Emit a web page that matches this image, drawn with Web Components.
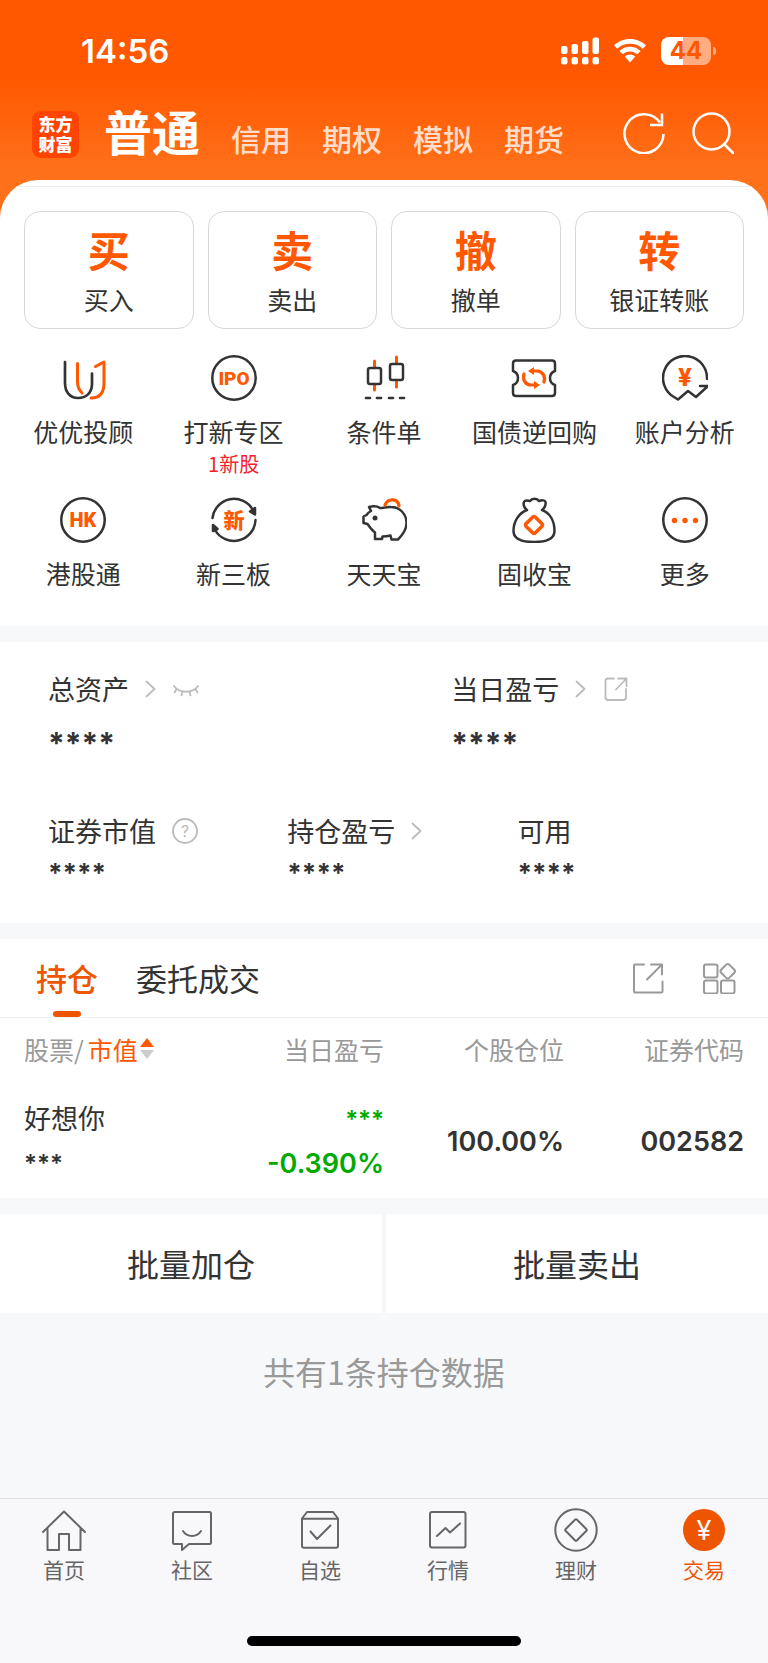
<!DOCTYPE html>
<html lang="zh-CN">
<head>
<meta charset="utf-8">
<meta name="viewport" content="width=device-width,initial-scale=1">
<title>交易</title>
<style>
:root{
    --themeColor:#ff5800;
    --activeColor:#ee5500;
    --textColor:#333;
    --mutedColor:#999;
    --pageColor:#f7f8fa;
    --numFont:Inter,"Noto Sans CJK SC",sans-serif;
}
body{
    margin:0;
    display:flex;
    flex-direction:column;
    min-height:100vh;
    background:var(--pageColor);
    color:var(--textColor);
    font-family:"Noto Sans CJK SC",sans-serif;
}
main{
    flex:1;
    display:flex;
    flex-direction:column;
    gap:16px;
}
</style>
</head>
<body>
<trade-header>
    <status-bar slot="status" level="44">14:56</status-bar>
    <a slot="current" href="#normal">普通</a>
    <a href="#credit">信用</a>
    <a href="#option">期权</a>
    <a href="#mock">模拟</a>
    <a href="#futures">期货</a>
</trade-header>
<main>
    <quick-panel>
        <quick-action slot="action" mark="买">买入</quick-action>
        <quick-action slot="action" mark="卖">卖出</quick-action>
        <quick-action slot="action" mark="撤">撤单</quick-action>
        <quick-action slot="action" mark="转">银证转账</quick-action>
        <menu-item icon="adviser">优优投顾</menu-item>
        <menu-item icon="ipo" note="1新股">打新专区</menu-item>
        <menu-item icon="candle">条件单</menu-item>
        <menu-item icon="repo">国债逆回购</menu-item>
        <menu-item icon="analysis">账户分析</menu-item>
        <menu-item icon="hk">港股通</menu-item>
        <menu-item icon="board">新三板</menu-item>
        <menu-item icon="pig">天天宝</menu-item>
        <menu-item icon="bag">固收宝</menu-item>
        <menu-item icon="more">更多</menu-item>
    </quick-panel>
    <asset-panel>
        <asset-item slot="total" size="large" value="****" arrow icon="eye" tip="显示金额">总资产</asset-item>
        <asset-item slot="total" size="large" value="****" arrow icon="share" tip="分享">当日盈亏</asset-item>
        <asset-item value="****" icon="help" tip="说明">证券市值</asset-item>
        <asset-item value="****" arrow>持仓盈亏</asset-item>
        <asset-item value="****">可用</asset-item>
    </asset-panel>
    <position-panel></position-panel>
    <batch-bar>
        <button-cell>批量加仓</button-cell>
        <button-cell>批量卖出</button-cell>
        <span slot="note">共有1条持仓数据</span>
    </batch-bar>
</main>
<tab-bar>
    <tab-item icon="home">首页</tab-item>
    <tab-item icon="chat">社区</tab-item>
    <tab-item icon="watch">自选</tab-item>
    <tab-item icon="quote">行情</tab-item>
    <tab-item icon="wealth">理财</tab-item>
    <tab-item icon="trade" active>交易</tab-item>
</tab-bar>

<script>
// [viewBox width, viewBox height, markup]; class o = orange stroke, f = orange fill
const ICONS = {
    signal: [38, 28, '<g fill="currentColor" stroke="none"><rect y="9" width="6.500" height="8" rx="2"/><rect x="10.500" y="7" width="6.500" height="10" rx="2"/><rect x="21" y="4" width="6.500" height="13" rx="2"/><rect x="31.500" y=".5" width="6.500" height="16.500" rx="2"/><rect y="20" width="6.500" height="7.500" rx="2.500"/><rect x="10.500" y="20" width="6.500" height="7.500" rx="2.500"/><rect x="21" y="20" width="6.500" height="7.500" rx="2.500"/><rect x="31.500" y="20" width="6.500" height="7.500" rx="2.500"/></g>'],
    wifi: [34, 28, '<g fill="currentColor" stroke="none"><path d="M17 2C10.600 2 5 4.500 1 8.300l3.200 3.400C7.400 8.600 12 6.700 17 6.700s9.600 1.900 12.800 5L33 8.300C29 4.500 23.400 2 17 2z"/><path d="M17 9.800c-4.200 0-7.900 1.600-10.600 4.100l3.300 3.400c1.900-1.700 4.500-2.800 7.300-2.800s5.400 1.100 7.300 2.800l3.300-3.400C24.900 11.400 21.200 9.800 17 9.800z"/><path d="M17 17.500c-2 0-3.900.8-5.200 2L17 25.500l5.200-6c-1.300-1.200-3.200-2-5.200-2z"/></g>'],
    refresh: [42, 42, '<path d="M40.500 22A19.500 19.500 0 1 1 37 10.500M39 1.500V13H27" stroke-width="2.500" stroke-linecap="butt" stroke-linejoin="miter"/>'],
    search: [42, 42, '<circle cx="19.500" cy="19.500" r="18" stroke-width="2.500"/><path d="M32 32l9 9" stroke-width="2.700"/>'],
    adviser: [46, 46, '<path d="M5 7V28C5 37 10 43 18 43S32 38 32 29V18.500" stroke-width="2.700"/><path class="o" d="M17.500 8.500V27c0 5 1.500 8 4.500 11M35.500 11.500L44 7v21c0 10-4 15-13 15" stroke-width="3"/>'],
    ipo: [46, 46, '<circle cx="23" cy="23" r="21.700"/><text x="23" y="30" font-family="Roboto,sans-serif" font-size="19" font-weight="900">IPO</text>'],
    candle: [46, 46, '<path class="o" d="M13.500 6v6M13.500 30v5M35.500 2v6M35.500 27v5" stroke-width="3"/><rect x="7" y="13" width="13" height="16" rx="2"/><rect x="29" y="9" width="13" height="16" rx="2"/><path d="M5 43h4M16 43h4M28 43h4M39 43h4" stroke-width="2.700"/>'],
    repo: [46, 46, '<path d="M5 5.500h36q3 0 3 3V16c-3 1-5 4-5 7s2 6 5 7v8q0 3-3 3H5q-3 0-3-3v-8c3-1 5-4 5-7s-2-6-5-7V8.500q0-3 3-3z"/><path class="o" d="M13 19c-2 6 2 11 7 11h4M33 27c2-6-2-11-7-11h-4" stroke-width="3.200"/><path class="f" d="M23 12v8l-6-4zM23 34v-8l6 4z"/>'],
    analysis: [46, 46, '<path d="M45 24A22 22 0 1 0 12 42l4 2.500L26 36l8 6L46 31h-8"/><text x="23" y="31" font-family="Inter,sans-serif" font-size="24" font-weight="800">¥</text>'],
    hk: [46, 46, '<circle cx="23" cy="23" r="21.700"/><text x="23" y="30" font-family="Roboto,sans-serif" font-size="20" font-weight="900">HK</text>'],
    board: [46, 46, '<path d="M1.500 21A21.700 21.700 0 0 1 42 13M44.500 23A21.700 21.700 0 0 1 4 33"/><path d="M44 11v6.500l-5-3zM2 34v-6l4.500 4z" fill="currentColor"/><text x="23" y="30.500" font-size="21" font-weight="900">新</text>'],
    pig: [46, 46, '<path d="M8 10c4-1 8-1 11 1 4 0 7-1.500 11-1 9 0 15 7 15.500 15 .5 7-4 13-8.500 17.500h-6.500l-1-4c-4 1-5 1-8 1l-.5 2.500H14v-6.500c-3-2-5-5-7.500-8.500L2.500 26v-6.500l3-1.500C7 15.500 8 15 10 14z"/><path class="o" d="M24 8c3-7 13-7 14 1" stroke-width="3.200"/><circle cx="14" cy="21" r="2.500" fill="currentColor" stroke="none"/>'],
    bag: [46, 46, '<path d="M16 13c-3-2-4-6-3-8s3-2 6-1c2-3 7-3 9 0 3-1 6-1 6.500 1s-.5 6-3.500 8c8 3 12.500 11 12.500 21 0 8-7 11-20.500 11S2.500 42 2.500 34C2.500 24 8 16 16 13z"/><rect class="o" x="16.500" y="21.500" width="13" height="13" rx="2" transform="rotate(45 23 28)" stroke-width="3.500"/>'],
    more: [46, 46, '<circle cx="23" cy="23" r="21.700"/><g class="f"><circle cx="12.500" cy="23.500" r="2.700"/><circle cx="23" cy="23.500" r="2.700"/><circle cx="33.500" cy="23.500" r="2.700"/></g>'],
    chevron: [12, 18, '<path d="M1.500 1.500L9.500 9l-8 7.500" stroke-width="1.800"/>'],
    eye: [26, 26, '<path d="M1 10c5 7.500 19 7.500 24 0M3.500 13l-2 3.500M9.500 15.500l-1 4M16.500 15.500l1 4M22.500 13l2 3.500" stroke-width="1.700"/>'],
    share: [26, 26, '<path d="M11 2.500H5Q2.500 2.500 2.500 5v16q0 3 2.500 3h15q3 0 3-3v-8M15 2.500h8.500V10M23.500 2.500L13 13.500" stroke-width="1.800"/>'],
    help: [26, 26, '<circle cx="13" cy="13" r="12" stroke-width="1.800"/><text x="13" y="19" font-family="Inter,sans-serif" font-size="16" fill="currentColor">?</text>'],
    open: [32, 32, '<path d="M12 2.500H3Q2 2.500 2 3.500V29q0 1.500 1 1.500h26q1.500 0 1.500-1.500V19.500M19 2.500h11v10M30 2.500L15 17.500" stroke-width="2"/>'],
    grid: [34, 32, '<rect x="2" y="2.500" width="13.500" height="13" rx="2"/><rect x="2" y="18.500" width="13.500" height="13" rx="2"/><rect x="19" y="18.500" width="13.500" height="13" rx="2"/><rect x="20" y="3.500" width="11.500" height="11.500" rx="2.500" transform="rotate(45 25.750 9.250)"/>'],
    home: [44, 44, '<path d="M1 24L22 3.500 43 24M5.500 20.500V42h11.500V26h10v16h11.500V20.500"/>'],
    chat: [44, 44, '<path d="M5 4h34.500q1.500 0 1.500 1.500v29q0 1.500-1.500 1.500H19l-7 6v-6H4.500Q3 36 3 34.500v-29Q3 4 5 4z"/><path d="M13 23c4 6.500 14 6.500 18 0"/>'],
    watch: [44, 44, '<path d="M9 4h26l5 6.500V38q0 1.800-2 1.800H6q-2 0-2-1.800V10.500zM4 10.800h36M12.500 23.500l6.500 7.500 13.500-13.500"/>'],
    quote: [44, 44, '<rect x="4" y="4" width="35.500" height="35.500" rx="2"/><path d="M11 28l8.500-8 4.500 4.500L34 15.500"/>'],
    wealth: [44, 44, '<circle cx="22" cy="22" r="20.700"/><rect x="14" y="14" width="16" height="16" rx="1.500" transform="rotate(45 22 22)"/>'],
    trade: [44, 44, '<circle cx="22" cy="22" r="21" fill="currentColor" stroke="none"/><text x="22" y="32" font-family="Inter,sans-serif" font-size="27" style="fill:#fff">¥</text>'],
    sort: [14, 22, '<path class="f" d="M7 0l7 9H0z"/><path d="M7 21l7-9H0z" fill="#ccc" stroke="none"/>']
};

class AppIcon extends HTMLElement {

    constructor() {
        super();
        this.attachShadow({ mode: 'open' });
    }

    connectedCallback() {
        const [w, h, body] = ICONS[this.getAttribute('name')];
        this.shadowRoot.innerHTML = `
        <style>
        :host{
            display:inline-flex;
            flex:none;
        }
        svg{
            display:block;
            fill:none;
            stroke:currentColor;
            stroke-width:var(--iconStroke,2);
            stroke-linecap:round;
            stroke-linejoin:round;
        }
        .o{
            stroke:var(--themeColor);
        }
        .f{
            fill:var(--themeColor);
            stroke:none;
        }
        text{
            fill:var(--iconText,var(--themeColor));
            stroke:none;
            text-anchor:middle;
        }
        </style>
        <svg width="${w}" height="${h}" viewBox="0 0 ${w} ${h}" aria-hidden="true">${body}</svg>
        `
    }
}
customElements.define('app-icon', AppIcon);

class StatusBar extends HTMLElement {

    constructor() {
        super();
        const shadowRoot = this.attachShadow({ mode: 'open' });
        shadowRoot.innerHTML = `
        <style>
        :host{
            display:flex;
            align-items:center;
            gap:14px;
            height:40px;
            padding:31px 52px 0 81px;
            font:600 33px/40px var(--numFont);
            color:#fff;
        }
        .time{
            flex:1;
        }
        .battery{
            display:flex;
            align-items:center;
            gap:2px;
        }
        .level{
            box-sizing:border-box;
            width:50px;
            height:28px;
            border-radius:8px;
            background:linear-gradient(90deg,#fff 44%,rgba(255,255,255,.5) 44%);
            color:var(--themeColor);
            font-size:24px;
            font-weight:700;
            line-height:28px;
            text-align:center;
        }
        .battery::after{
            content:'';
            width:3px;
            height:8px;
            border-radius:0 4px 4px 0;
            background:rgba(255,255,255,.5);
        }
        </style>
        <span class="time"><slot></slot></span>
        <app-icon name="signal"></app-icon>
        <app-icon name="wifi"></app-icon>
        <span class="battery"><span class="level"></span></span>
        `
    }

    connectedCallback() {
        this.shadowRoot.querySelector('.level').textContent = this.getAttribute('level');
    }
}
customElements.define('status-bar', StatusBar);

class TradeHeader extends HTMLElement {

    constructor() {
        super();
        const shadowRoot = this.attachShadow({ mode: 'open' });
        shadowRoot.innerHTML = `
        <style>
        :host{
            display:block;
            padding-bottom:64px;
            background:linear-gradient(#ff5800 76px,#ff701a 170px);
            color:#fff;
        }
        .bar{
            display:flex;
            align-items:center;
            height:80px;
            margin-top:23px;
            padding:0 34px 0 32px;
        }
        .logo{
            display:flex;
            flex-direction:column;
            justify-content:center;
            width:47px;
            height:47px;
            border-radius:9px;
            background:#ff4400;
            font-size:17px;
            font-weight:900;
            line-height:20px;
            text-align:center;
        }
        nav{
            flex:1;
            display:flex;
            align-items:baseline;
            gap:31px;
            margin-left:25px;
        }
        ::slotted(a){
            color:rgba(255,255,255,.8);
            font-size:30px;
            font-weight:500;
            line-height:72px;
            text-decoration:none;
        }
        ::slotted([slot=current]){
            color:#fff;
            font-size:48px;
            font-weight:700;
        }
        .tools{
            display:flex;
            gap:27px;
        }
        button{
            padding:0;
            border:0;
            background:none;
            color:inherit;
            cursor:pointer;
        }
        </style>
        <slot name="status"></slot>
        <div class="bar">
            <div class="logo"><span>东方</span><span>财富</span></div>
            <nav><slot name="current"></slot><slot></slot></nav>
            <div class="tools">
                <button aria-label="刷新"><app-icon name="refresh"></app-icon></button>
                <button aria-label="搜索"><app-icon name="search"></app-icon></button>
            </div>
        </div>
        `
    }
}
customElements.define('trade-header', TradeHeader);

class QuickPanel extends HTMLElement {

    constructor() {
        super();
        const shadowRoot = this.attachShadow({ mode: 'open' });
        shadowRoot.innerHTML = `
        <style>
        :host{
            display:block;
            margin-top:-58px;
            padding-top:6px;
            border-radius:38px 38px 0 0;
            background:#fff;
            overflow:hidden;
        }
        .actions{
            display:grid;
            grid-template-columns:repeat(4,1fr);
            gap:14px;
            padding:24px 24px 0;
            border-top:1px solid #eee;
        }
        .menu{
            display:grid;
            grid-template-columns:repeat(5,1fr);
            grid-auto-rows:129px;
            row-gap:13px;
            padding:26px 8px 0;
        }
        </style>
        <div class="actions"><slot name="action"></slot></div>
        <div class="menu"><slot></slot></div>
        `
    }
}
customElements.define('quick-panel', QuickPanel);

class QuickAction extends HTMLElement {

    constructor() {
        super();
        const shadowRoot = this.attachShadow({ mode: 'open' });
        shadowRoot.innerHTML = `
        <style>
        :host{
            display:block;
        }
        button{
            box-sizing:border-box;
            display:flex;
            flex-direction:column;
            align-items:center;
            width:100%;
            height:118px;
            padding:13px 0 0;
            border:1px solid #d8d8d8;
            border-radius:16px;
            background:#fff;
            color:inherit;
            font:inherit;
            font-size:25px;
            line-height:32px;
            cursor:pointer;
        }
        b{
            color:var(--themeColor);
            font-size:42px;
            line-height:48px;
            margin-bottom:10px;
        }
        button:active{
            background:#f5f5f5;
        }
        </style>
        <button><b></b><span><slot></slot></span></button>
        `
    }

    connectedCallback() {
        this.shadowRoot.querySelector('b').textContent = this.getAttribute('mark');
    }
}
customElements.define('quick-action', QuickAction);

class MenuItem extends HTMLElement {

    constructor() {
        super();
        this.attachShadow({ mode: 'open' });
    }

    connectedCallback() {
        const note = this.getAttribute('note');
        this.shadowRoot.innerHTML = `
        <style>
        :host{
            display:block;
            --iconStroke:2.5;
        }
        a{
            display:flex;
            flex-direction:column;
            align-items:center;
            color:inherit;
            font-size:25px;
            line-height:32px;
            text-decoration:none;
            white-space:nowrap;
        }
        app-icon{
            margin-bottom:14px;
        }
        small{
            color:#f5222d;
            font-size:20px;
            line-height:34px;
        }
        </style>
        <a href="#${this.getAttribute('icon')}"><app-icon name="${this.getAttribute('icon')}"></app-icon><slot></slot>${note ? `<small>${note}</small>` : ''}</a>
        `
    }
}
customElements.define('menu-item', MenuItem);

class AssetPanel extends HTMLElement {

    constructor() {
        super();
        const shadowRoot = this.attachShadow({ mode: 'open' });
        shadowRoot.innerHTML = `
        <style>
        :host{
            display:flex;
            flex-direction:column;
            gap:52px;
            padding:29px 48px 32px;
            background:#fff;
        }
        div{
            display:grid;
        }
        .total{
            grid-template-columns:3fr 2fr;
        }
        .detail{
            grid-template-columns:26fr 25fr 22fr;
        }
        </style>
        <div class="total"><slot name="total"></slot></div>
        <div class="detail"><slot></slot></div>
        `
    }
}
customElements.define('asset-panel', AssetPanel);

class AssetItem extends HTMLElement {

    constructor() {
        super();
        this.attachShadow({ mode: 'open' });
    }

    connectedCallback() {
        const icon = this.getAttribute('icon');
        const arrow = this.hasAttribute('arrow');
        this.shadowRoot.innerHTML = `
        <style>
        :host{
            display:block;
            font-size:27px;
            line-height:36px;
        }
        .label{
            display:flex;
            align-items:center;
            gap:16px;
        }
        app-icon{
            color:#bbb;
            --iconText:#bbb;
        }
        button{
            display:flex;
            padding:0;
            border:0;
            background:none;
            cursor:pointer;
        }
        .value{
            padding-top:6px;
            font-family:var(--numFont);
            font-size:26px;
            font-weight:700;
            line-height:36px;
        }
        :host([size=large]) .value{
            padding-top:18px;
            font-size:30px;
        }
        </style>
        <div class="label">
            <slot></slot>
            ${arrow ? '<app-icon name="chevron"></app-icon>' : ''}
            ${icon ? `<button aria-label="${this.getAttribute('tip')}"><app-icon name="${icon}"></app-icon></button>` : ''}
        </div>
        <div class="value">${this.getAttribute('value')}</div>
        `
    }
}
customElements.define('asset-item', AssetItem);

class PositionPanel extends HTMLElement {

    constructor() {
        super();
        const shadowRoot = this.attachShadow({ mode: 'open' });
        shadowRoot.innerHTML = `
        <style>
        :host{
            display:block;
            background:#fff;
        }
        .tabs{
            display:flex;
            align-items:center;
            gap:38px;
            height:78px;
            padding:0 32px 0 36px;
            border-bottom:1px solid #f0f1f3;
        }
        button{
            padding:0;
            border:0;
            background:none;
            color:inherit;
            font:inherit;
            cursor:pointer;
        }
        .tab{
            height:78px;
            font-size:31px;
            line-height:78px;
        }
        .tab.active{
            display:flex;
            flex-direction:column;
            align-items:center;
            color:var(--activeColor);
            font-weight:500;
        }
        .tab.active::after{
            content:'';
            width:28px;
            height:6px;
            margin-top:-6px;
            border-radius:3px;
            background:var(--activeColor);
        }
        .tools{
            display:flex;
            gap:38px;
            margin-left:auto;
            color:#999;
        }
        .tools button{
            display:flex;
        }
        table{
            width:100%;
            padding:0 24px;
            border-spacing:0;
            table-layout:fixed;
        }
        th,td{
            padding:0;
            text-align:right;
            white-space:nowrap;
        }
        th:first-child,td:first-child{
            text-align:left;
        }
        th{
            height:62px;
            color:var(--mutedColor);
            font-size:25px;
            font-weight:400;
        }
        th button{
            display:flex;
            align-items:center;
            gap:2px;
        }
        em{
            padding-left:4px;
            color:var(--themeColor);
            font-style:normal;
        }
        td{
            height:113px;
            padding-top:5px;
            font-family:var(--numFont);
            font-size:27px;
            font-weight:600;
            line-height:40px;
        }
        .name{
            font-weight:400;
        }
        .mask{
            font-size:24px;
        }
        .down{
            color:#0a0;
        }
        td div + div{
            margin-top:4px;
        }
        </style>
        <div class="tabs">
            <button class="tab active">持仓</button>
            <button class="tab">委托成交</button>
            <div class="tools">
                <button aria-label="分享"><app-icon name="open"></app-icon></button>
                <button aria-label="模块"><app-icon name="grid"></app-icon></button>
            </div>
        </div>
        <table>
            <thead>
                <tr>
                    <th><button><span>股票/<em>市值</em></span><app-icon name="sort"></app-icon></button></th>
                    <th>当日盈亏</th>
                    <th>个股仓位</th>
                    <th>证券代码</th>
                </tr>
            </thead>
            <tbody>
                <tr>
                    <td><div class="name">好想你</div><div class="mask">***</div></td>
                    <td class="down"><div class="mask">***</div><div>-0.390%</div></td>
                    <td>100.00%</td>
                    <td>002582</td>
                </tr>
            </tbody>
        </table>
        `
    }
}
customElements.define('position-panel', PositionPanel);

class BatchBar extends HTMLElement {

    constructor() {
        super();
        const shadowRoot = this.attachShadow({ mode: 'open' });
        shadowRoot.innerHTML = `
        <style>
        :host{
            display:block;
        }
        .cells{
            display:grid;
            grid-template-columns:1fr 1fr;
            gap:4px;
        }
        .note{
            padding:36px 0;
            color:var(--mutedColor);
            font-size:32px;
            line-height:44px;
            text-align:center;
        }
        </style>
        <div class="cells"><slot></slot></div>
        <div class="note"><slot name="note"></slot></div>
        `
    }
}
customElements.define('batch-bar', BatchBar);

class ButtonCell extends HTMLElement {

    constructor() {
        super();
        const shadowRoot = this.attachShadow({ mode: 'open' });
        shadowRoot.innerHTML = `
        <style>
        :host{
            display:block;
        }
        button{
            width:100%;
            padding:25px 0 26px;
            border:0;
            background:#fff;
            color:inherit;
            font:inherit;
            font-size:32px;
            line-height:48px;
            cursor:pointer;
        }
        </style>
        <button><slot></slot></button>
        `
    }
}
customElements.define('button-cell', ButtonCell);

class TabBar extends HTMLElement {

    constructor() {
        super();
        const shadowRoot = this.attachShadow({ mode: 'open' });
        shadowRoot.innerHTML = `
        <style>
        :host{
            display:block;
            padding-bottom:17px;
            border-top:1px solid #dfe0e3;
            background:#f8f8fb;
        }
        nav{
            display:grid;
            grid-template-columns:repeat(6,1fr);
            padding:9px 0 52px;
        }
        .indicator{
            width:274px;
            height:10px;
            margin:0 auto;
            border-radius:5px;
            background:#000;
        }
        </style>
        <nav><slot></slot></nav>
        <div class="indicator"></div>
        `
    }
}
customElements.define('tab-bar', TabBar);

class TabItem extends HTMLElement {

    constructor() {
        super();
        this.attachShadow({ mode: 'open' });
    }

    connectedCallback() {
        const icon = this.getAttribute('icon');
        this.shadowRoot.innerHTML = `
        <style>
        :host{
            display:block;
            color:#666;
        }
        :host([active]){
            color:var(--activeColor);
        }
        a{
            display:flex;
            flex-direction:column;
            align-items:center;
            gap:2px;
            color:inherit;
            font-size:21px;
            line-height:30px;
            text-decoration:none;
        }
        </style>
        <a href="#${icon}"><app-icon name="${icon}"></app-icon><span><slot></slot></span></a>
        `
    }
}
customElements.define('tab-item', TabItem);
</script>
</body>
</html>
